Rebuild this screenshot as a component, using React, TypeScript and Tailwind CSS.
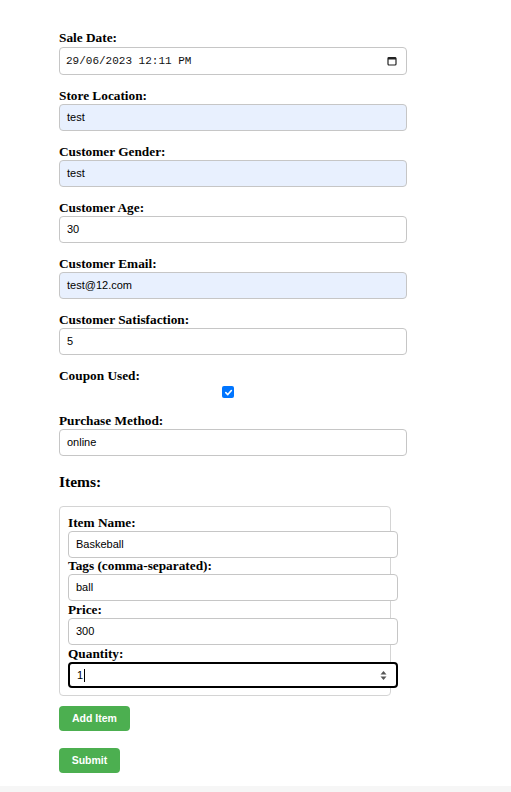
import React from "react";

const labelCls =
  "block font-['Liberation_Serif',serif] font-bold text-[13.3px] leading-[16px] text-black";
const inputBase =
  "flex items-center h-[27px] border border-[#c6c6c6] rounded-[4px] pl-[7px] pr-[8px] font-['Liberation_Sans',Arial,sans-serif] text-[11px] text-black";

function Field({
  label,
  value,
  autofill,
}: {
  label: string;
  value: string;
  autofill?: boolean;
}) {
  return (
    <div className="mb-[13px]">
      <label className={labelCls}>{label}</label>
      <div
        className={`${inputBase} w-[348px] ${
          autofill ? "bg-[#e8f0fe]" : "bg-white"
        }`}
      >
        {value}
      </div>
    </div>
  );
}

function ItemField({
  label,
  value,
  gap,
}: {
  label: string;
  value: string;
  gap: string;
}) {
  return (
    <div className={gap}>
      <label className={labelCls}>{label}</label>
      <div className={`${inputBase} w-[330px] bg-white`}>{value}</div>
    </div>
  );
}

export default function App() {
  return (
    <div className="min-h-screen bg-[#f6f6f6]">
      <div className="bg-white pl-[59px] pt-[30px] pb-[13px]">
        <div className="w-[332px]">
          {/* Sale Date */}
          <div className="mb-[13px]">
            <label className={labelCls}>Sale Date:</label>
            <div className="mt-[1px] flex h-[28px] w-[348px] items-center justify-between rounded-[4px] border border-[#c6c6c6] bg-white pl-[6px] pr-[9px]">
              <span className="font-['Liberation_Mono',monospace] text-[11px] text-[#111]">
                29/06/2023 12:11 PM
              </span>
              <svg width="10" height="10" viewBox="0 0 10 10">
                <rect
                  x="1"
                  y="1.5"
                  width="8"
                  height="7.5"
                  rx="1"
                  fill="none"
                  stroke="#222"
                  strokeWidth="1.2"
                />
                <rect x="1" y="1.5" width="8" height="2" fill="#222" />
              </svg>
            </div>
          </div>

          <Field label="Store Location:" value="test" autofill />
          <Field label="Customer Gender:" value="test" autofill />
          <Field label="Customer Age:" value="30" />
          <Field label="Customer Email:" value="test@12.com" autofill />
          <Field label="Customer Satisfaction:" value="5" />

          {/* Coupon Used */}
          <div className="mb-[15px]">
            <label className={labelCls}>Coupon Used:</label>
            <div className="mt-[2px] ml-[163px] flex h-[12px] w-[12px] items-center justify-center rounded-[2px] bg-[#0075ff]">
              <svg width="9" height="9" viewBox="0 0 10 10">
                <path
                  d="M2 5.2 L4.2 7.3 L8.2 2.8"
                  fill="none"
                  stroke="white"
                  strokeWidth="1.8"
                  strokeLinecap="round"
                  strokeLinejoin="round"
                />
              </svg>
            </div>
          </div>

          <div className="mb-[17px]">
            <label className={labelCls}>Purchase Method:</label>
            <div className={`${inputBase} w-[348px] bg-white`}>online</div>
          </div>

          <h3 className="font-['Liberation_Serif',serif] text-[15.5px] font-bold leading-[17px] text-black">
            Items:
          </h3>

          <div className="mt-[16px] w-[332px] rounded-[4px] border border-[#d4d4d4] px-[8px] pt-[8px] pb-[7px]">
            <ItemField label="Item Name:" value="Baskeball" gap="mb-0" />
            <ItemField
              label="Tags (comma-separated):"
              value="ball"
              gap="mb-[1px]"
            />
            <ItemField label="Price:" value="300" gap="mb-[1px]" />
            <div>
              <label className={labelCls}>Quantity:</label>
              <div className="flex h-[26px] w-[330px] items-center justify-between rounded-[4px] border-2 border-black bg-white pl-[7px] pr-[9px] font-['Liberation_Sans',Arial,sans-serif] text-[11px] text-black">
                <span className="flex items-center">
                  1
                  <span className="ml-[1px] inline-block h-[13px] w-[1px] bg-black" />
                </span>
                <svg width="7" height="11" viewBox="0 0 7 11">
                  <path d="M3.5 1 L6.5 4.5 L0.5 4.5 Z" fill="#555" />
                  <path d="M3.5 10 L6.5 6.5 L0.5 6.5 Z" fill="#555" />
                </svg>
              </div>
            </div>
          </div>

          <button className="mt-[10px] flex h-[25px] w-[71px] items-center justify-center rounded-[4px] bg-[#4caf50] font-['Liberation_Sans',Arial,sans-serif] text-[10.5px] font-bold text-white">
            Add Item
          </button>
          <button className="mt-[17px] flex h-[25px] w-[61px] items-center justify-center rounded-[4px] bg-[#4caf50] font-['Liberation_Sans',Arial,sans-serif] text-[10.5px] font-bold text-white">
            Submit
          </button>
        </div>
      </div>
    </div>
  );
}
